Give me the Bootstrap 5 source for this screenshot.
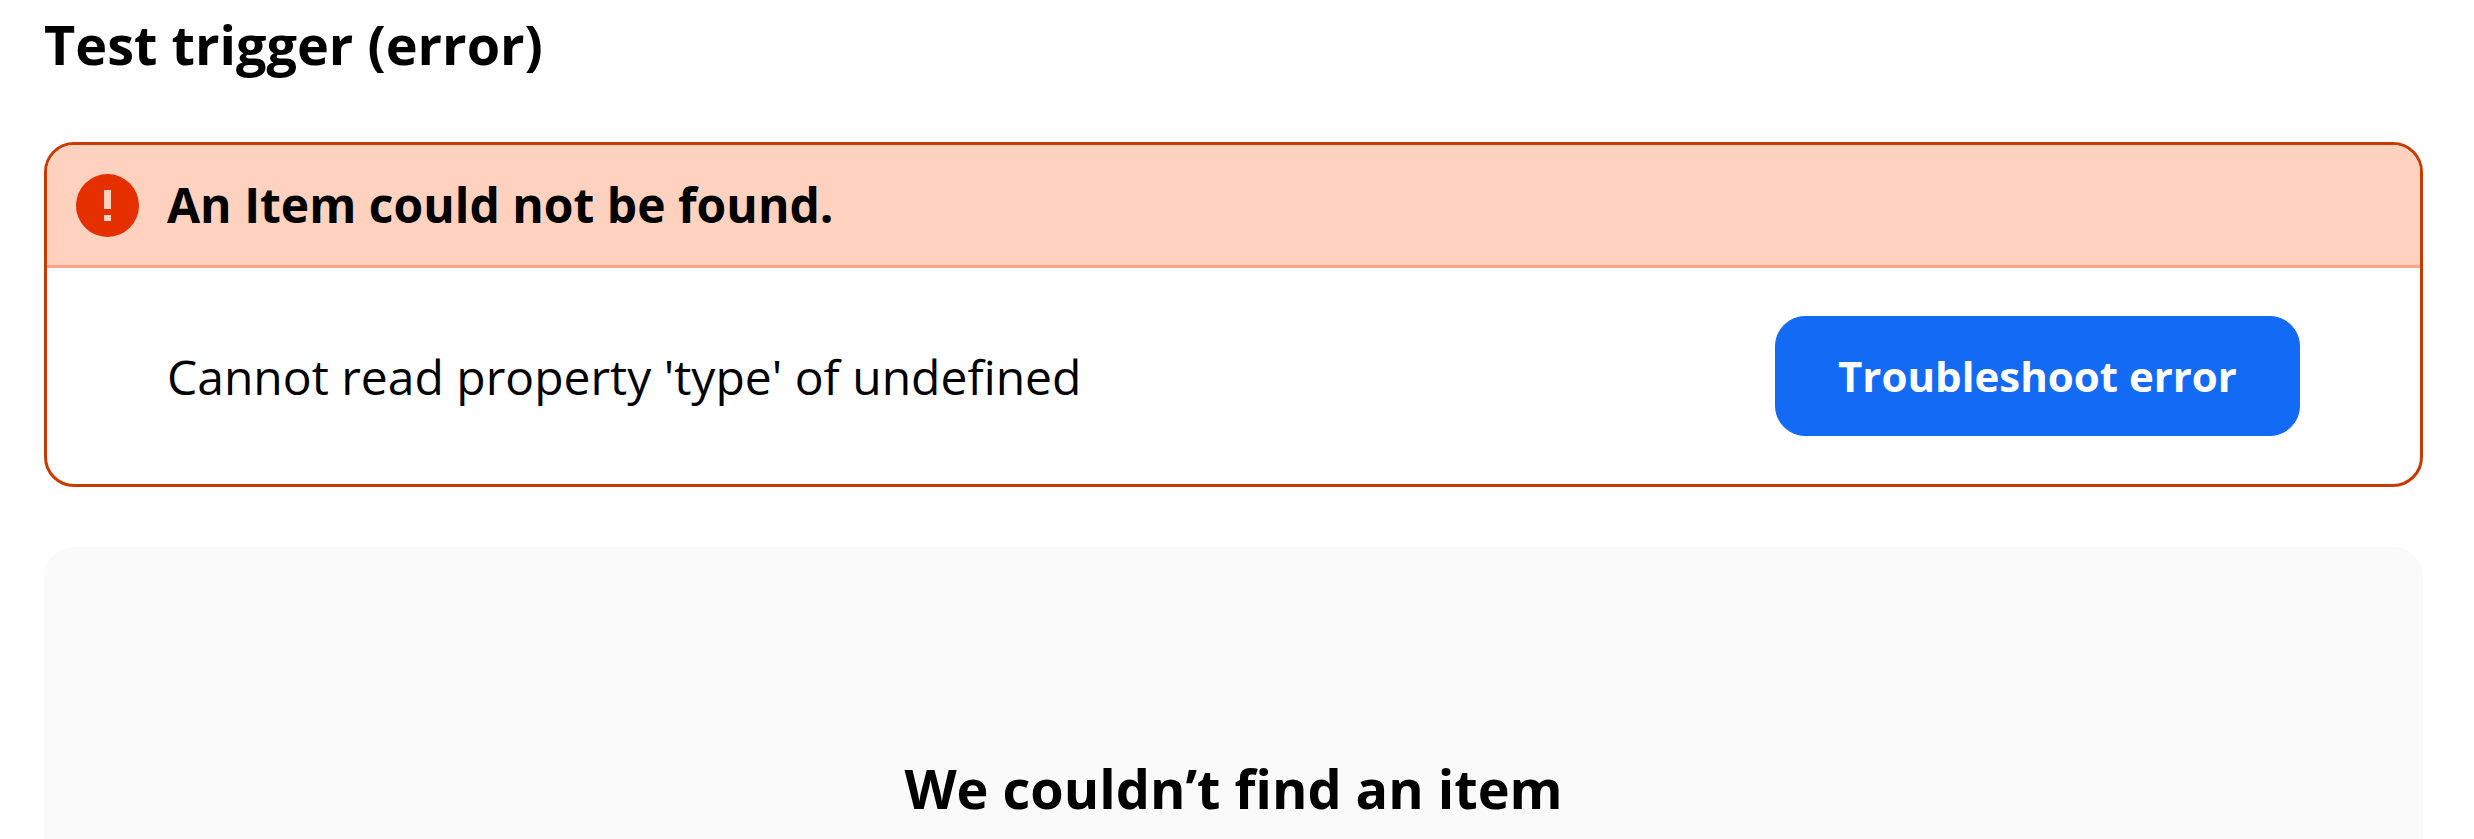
<!DOCTYPE html>
<html lang="en">
<head>
    <meta charset="UTF-8">
    <meta name="viewport" content="width=device-width, initial-scale=1.0">
    <title>Test trigger</title>
    <!-- Bootstrap CSS -->
    <link href="https://cdn.jsdelivr.net/npm/bootstrap@5.3.2/dist/css/bootstrap.min.css" rel="stylesheet">
    <style>
        body {
            font-family: "Open Sans", "Noto Sans", sans-serif;
            color: #000;
        }
        .trigger-page {
            height: 839px;
            padding: 8px 51px 0 44px;
        }
        .section-title {
            font-size: 54px;
            line-height: 72px;
            color: #000;
        }
        .error-card {
            margin-top: 62px;
            border: 3px solid #c73a00;
            border-radius: 30px;
            font-size: 48px;
            line-height: 72px;
        }
        .error-card .card-header {
            height: 123px;
            padding: 0 28px;
            gap: 28px;
            background-color: #ffd1bf;
            border-bottom: 3px solid #ffa48c;
            border-radius: 27px 27px 0 0;
        }
        .error-card .card-body {
            padding: 48px 120px;
            color: #000;
        }
        .error-detail {
            padding-top: 2px;
        }
        .btn-troubleshoot {
            width: 525px;
            height: 120px;
            padding: 0 0 2px;
            border-radius: 30px;
            font-size: 42px;
            --bs-btn-bg: #136bf5;
            --bs-btn-border-color: #136bf5;
        }
        .result-panel {
            margin-top: 60px;
            padding-top: 205px;
            background-color: #fafafa;
            border-radius: 30px 30px 0 0;
        }
    </style>
</head>
<body>
    <main class="trigger-page d-flex flex-column overflow-hidden">
        <h1 class="section-title fw-bold mb-0">Test trigger (error)</h1>

        <!-- Error card -->
        <div class="card error-card">
            <div class="card-header d-flex align-items-center fw-bold">
                <svg class="flex-shrink-0" width="64" height="64" viewBox="0 0 64 64" aria-hidden="true">
                    <circle cx="32.5" cy="32.5" r="31.5" fill="#e52f00"/>
                    <path d="M29 17h7v19h-7zM29 42h7v6h-7z" fill="#ffd1bf"/>
                </svg>
                <span>An Item could not be found.</span>
            </div>
            <div class="card-body d-flex align-items-center justify-content-between">
                <span class="error-detail">Cannot read property 'type' of undefined</span>
                <button type="button" class="btn btn-primary btn-troubleshoot fw-bold">Troubleshoot error</button>
            </div>
        </div>

        <!-- Empty result -->
        <section class="result-panel flex-grow-1 text-center">
            <h2 class="section-title fw-bold mb-0">We couldn’t find an item</h2>
        </section>
    </main>

    <!-- Bootstrap JS -->
    <script src="https://cdn.jsdelivr.net/npm/bootstrap@5.3.2/dist/js/bootstrap.bundle.min.js"></script>
</body>
</html>
